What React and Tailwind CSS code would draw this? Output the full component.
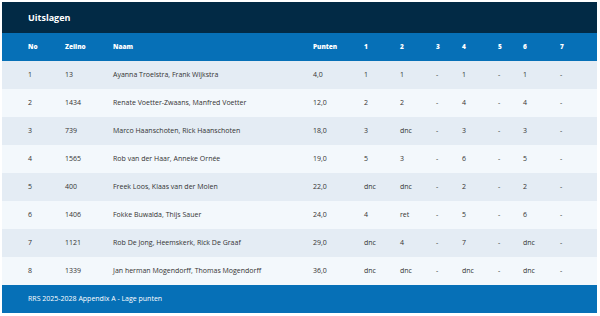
import React from "react";

const rows = [
  ["1", "13", "Ayanna Troelstra, Frank Wijkstra", "4,0", "1", "1", "-", "1", "-", "1", "-"],
  ["2", "1434", "Renate Voetter-Zwaans, Manfred Voetter", "12,0", "2", "2", "-", "4", "-", "4", "-"],
  ["3", "739", "Marco Haanschoten, Rick Haanschoten", "18,0", "3", "dnc", "-", "3", "-", "3", "-"],
  ["4", "1565", "Rob van der Haar, Anneke Ornée", "19,0", "5", "3", "-", "6", "-", "5", "-"],
  ["5", "400", "Freek Loos, Klaas van der Molen", "22,0", "dnc", "dnc", "-", "2", "-", "2", "-"],
  ["6", "1406", "Fokke Buwalda, Thijs Sauer", "24,0", "4", "ret", "-", "5", "-", "6", "-"],
  ["7", "1121", "Rob De Jong, Heemskerk, Rick De Graaf", "29,0", "dnc", "4", "-", "7", "-", "dnc", "-"],
  ["8", "1339", "Jan herman Mogendorff, Thomas Mogendorff", "36,0", "dnc", "dnc", "-", "dnc", "-", "dnc", "-"],
];

const headers = ["No", "Zeilno", "Naam", "Punten", "1", "2", "3", "4", "5", "6", "7"];

const grid =
  "grid grid-cols-[37px_48px_200px_51px_36px_36px_26px_36px_25px_37px_1fr] pl-[26px] items-center";

export default function App() {
  return (
    <div className="w-[600px] h-[316px] bg-white p-[2px] pr-[3px]" style={{ fontFamily: '"Open Sans", "Noto Sans", sans-serif' }}>
      <div className="flex flex-col w-full">
        <div className="h-[31px] bg-[#022a45] flex items-center pl-[26px]">
          <span className="text-white font-bold text-[9px]">Uitslagen</span>
        </div>
        <div className={`${grid} h-[28px] bg-[#0670b7] text-white font-extrabold text-[6.5px]`}>
          {headers.map((h) => (
            <div key={h}>{h}</div>
          ))}
        </div>
        {rows.map((r, i) => (
          <div
            key={i}
            className={`${grid} h-[28px] text-[#333] text-[7px] ${i % 2 === 0 ? "bg-[#e4ecf4]" : "bg-[#f3f8fc]"}`}
          >
            {r.map((c, j) => (
              <div key={j} className="whitespace-nowrap">{c}</div>
            ))}
          </div>
        ))}
        <div className="h-[28px] bg-[#0670b7] flex items-center pl-[26px]">
          <span className="text-white text-[7px]">RRS 2025-2028 Appendix A - Lage punten</span>
        </div>
      </div>
    </div>
  );
}
